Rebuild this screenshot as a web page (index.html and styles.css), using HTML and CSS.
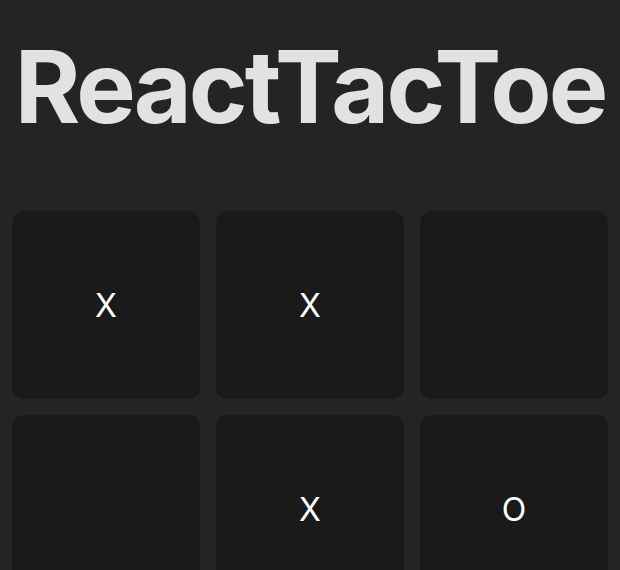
FILE: index.html
```html
<!DOCTYPE html>
<html lang="en">
<head>
<meta charset="utf-8">
<title>ReactTacToe</title>
<link rel="stylesheet" href="styles.css">
</head>
<body>
<main class="app">
  <h1 class="title">ReactTacToe</h1>
  <div class="board">
    <button class="cell">X</button>
    <button class="cell">X</button>
    <button class="cell"></button>
    <button class="cell"></button>
    <button class="cell">X</button>
    <button class="cell">O</button>
    <button class="cell"></button>
    <button class="cell"></button>
    <button class="cell"></button>
  </div>
</main>
</body>
</html>
```
FILE: styles.css
```css
html, body {
  margin: 0;
  padding: 0;
  background: #242424;
}
body {
  font-family: Inter, system-ui, "Liberation Sans", sans-serif;
  color: rgba(255, 255, 255, 0.87);
}
.app {
  padding: 32px 12px 0;
}
.title {
  margin: 0 0 69px;
  font-size: 100px;
  line-height: 1.1;
  font-weight: 700;
  letter-spacing: -3px;
  white-space: nowrap;
  text-align: center;
  color: rgba(255, 255, 255, 0.87);
}
.board {
  display: grid;
  grid-template-columns: repeat(3, 188px);
  grid-auto-rows: 188px;
  gap: 16px;
}
.cell {
  border: 0;
  border-radius: 12px;
  background: #1a1a1a;
  color: #ffffff;
  font-family: Inter, system-ui, "Liberation Sans", sans-serif;
  font-size: 32px;
  font-weight: 400;
  padding: 0;
}
```
